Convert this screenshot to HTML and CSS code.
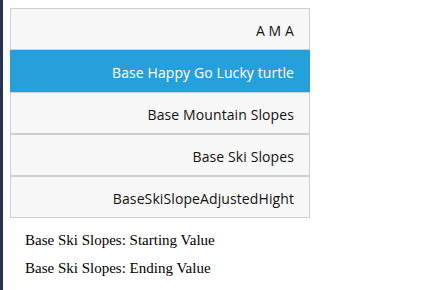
FILE: index.html
```html
<!DOCTYPE html>
<html lang="en">
<head>
    <meta charset="UTF-8">
    <title>Slopes</title>
    <link rel="stylesheet" href="styles.css">
</head>
<body>
    <div class="edge"></div>
    <div class="page">
        <ul class="list">
            <li class="item">A M A</li>
            <li class="item active">Base Happy Go Lucky turtle</li>
            <li class="item">Base Mountain Slopes</li>
            <li class="item">Base Ski Slopes</li>
            <li class="item">BaseSkiSlopeAdjustedHight</li>
        </ul>
        <div class="values">
            <p>Base Ski Slopes: Starting Value</p>
            <p>Base Ski Slopes: Ending Value</p>
        </div>
    </div>
</body>
</html>
```

FILE: styles.css
```css
body {
    margin: 0;
    background: #fff;
    display: flex;
    font-family: "Liberation Serif", serif;
}
.edge {
    width: 3px;
    min-height: 290px;
    background: #25344f;
}
.page {
    padding: 8px 0 0 7px;
}
.list {
    list-style: none;
    margin: 0;
    padding: 0;
    width: 300px;
    font-family: "Open Sans", sans-serif;
    font-size: 14px;
    letter-spacing: 0.1px;
}
.item {
    height: 36px;
    line-height: 36px;
    padding: 4px 15px 0;
    text-align: right;
    background: #f7f7f7;
    color: #111;
    border: 1px solid #cfcfcf;
}
.item.active {
    background: #279fda;
    border-color: #279fda;
    color: #fff;
}
.values {
    padding: 14px 15px 0;
    font-size: 15px;
}
.values p {
    margin: 0 0 11px;
    line-height: 17px;
}
```
